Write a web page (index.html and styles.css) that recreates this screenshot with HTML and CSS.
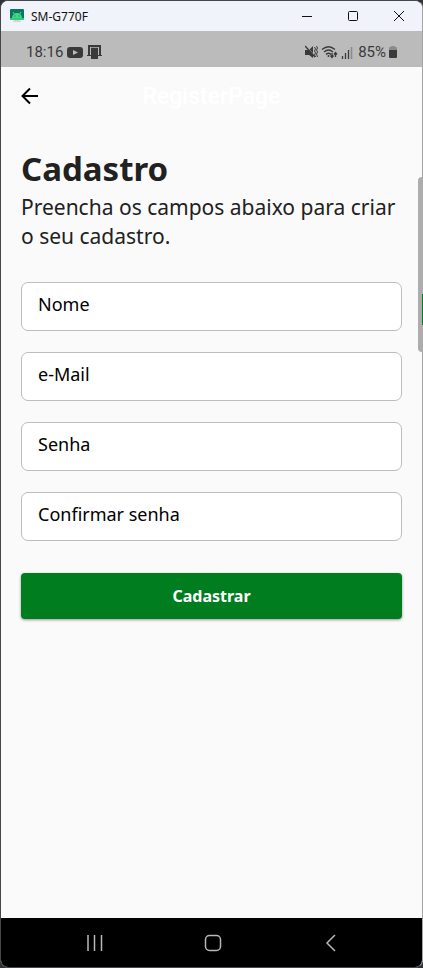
FILE: index.html
```html
<!DOCTYPE html>
<html lang="pt-BR">
<head>
<meta charset="utf-8">
<meta name="viewport" content="width=device-width, initial-scale=1">
<title>SM-G770F</title>
<link rel="stylesheet" href="styles.css">
</head>
<body>
<div class="window">
  <header class="titlebar">
    <svg class="app-icon" width="14" height="14" viewBox="0 0 14 14" aria-hidden="true">
      <rect width="14" height="11" rx="1" fill="#0d7367"/>
      <path d="M2 9a5 5 0 0 1 10 0z" fill="#3ddc84"/>
      <path d="M3 3l2 3M11 3l-2 3" stroke="#3ddc84"/>
      <path d="M4.500 7h1M8.500 7h1" stroke="#0d7367"/>
      <path d="M0 9h14v2H0z" fill="#35c878"/>
      <path d="M4 11h6v1h1v1H3v-1h1z" fill="#d5d3cf"/>
    </svg>
    <span class="device">SM-G770F</span>
    <div class="window-controls">
      <button type="button" aria-label="Minimizar"><svg width="12" height="12" viewBox="0 0 12 12"><path d="M1 6.500h10"/></svg></button>
      <button type="button" aria-label="Maximizar"><svg width="12" height="12" viewBox="0 0 12 12"><rect x="1.500" y="1.500" width="9" height="9" rx="1"/></svg></button>
      <button type="button" aria-label="Fechar"><svg width="12" height="12" viewBox="0 0 12 12"><path d="M1 1l10 10M11 1L1 11"/></svg></button>
    </div>
  </header>

  <div class="statusbar">
    <div class="status-group">
      <span>18:16</span>
      <svg width="16" height="12" viewBox="0 0 16 12" aria-hidden="true"><rect y="1" width="16" height="11" rx="3" fill="#3a3a3a"/><path d="M6 4v5l5-2.500z" fill="#bbb"/></svg>
      <svg width="16" height="16" viewBox="0 0 16 16" aria-hidden="true"><path d="M2 11V2h11v9" fill="none" stroke="#3a3a3a" stroke-width="2"/><path d="M0 11.500h4M11 11.500h4" stroke="#3a3a3a"/><path d="M4 4h7v11H4z" fill="#3a3a3a"/><path d="M4 3.500h7" stroke="#999"/></svg>
    </div>
    <div class="status-group status-right">
      <svg width="13" height="14" viewBox="0 0 13 14" aria-hidden="true"><path d="M0 5h4l4-4v12L4 10H0z" fill="#3a3a3a"/><path d="M1 1l9 10" stroke="#bbb"/><path d="M0 1l10 11" stroke="#3a3a3a" stroke-width="1.500"/><path d="M9.500 2l1 2-1 2 1 2-1 2 1 2M11.500 1l1 2-1 2 1 2-1 2 1 3" fill="none" stroke="#3a3a3a"/></svg>
      <svg width="17" height="14" viewBox="0 0 17 14" aria-hidden="true"><g fill="none" stroke="#3a3a3a" stroke-width="1.300"><path d="M1 4.500Q7.500-1 14 4.500M3 7Q7.500 3 12 7M5 9.500Q7.500 7 10 9.500"/><path d="M11 8v4M9.500 10.500L11 12.500l1.500-2M14.500 12V8M13 9.500L14.500 7.500 16 9.500"/></g><circle cx="7.500" cy="11" r="1" fill="#3a3a3a"/></svg>
      <svg width="12" height="13" viewBox="0 0 12 13" aria-hidden="true"><path d="M1.500 10v3M4.500 7v6M7.500 4v9" stroke="#3a3a3a" stroke-width="1.300"/><path d="M10.500 1v12" stroke="#8b8b8b" stroke-width="1.600"/></svg>
      <span class="charge">85%</span>
      <svg class="battery" width="8" height="14" viewBox="0 0 8 14" aria-hidden="true"><path d="M2 1h4v1h1q1 0 1 1v3H0V3q0-1 1-1h1z" fill="#8b8b8b"/><path d="M0 5h8v7q0 1-1 1H1q-1 0-1-1z" fill="#3a3a3a"/></svg>
    </div>
  </div>

  <nav class="appbar">
    <button type="button" class="back" aria-label="Voltar"><svg width="18" height="18" viewBox="0 0 18 18"><path d="M17 9H2M9 1.500L1.500 9 9 16.500"/></svg></button>
    <span class="page-title">RegisterPage</span>
  </nav>

  <main class="content">
    <h1>Cadastro</h1>
    <p class="intro">Preencha os campos abaixo para criar o seu cadastro.</p>
    <form class="form">
      <div class="field"><label for="nome">Nome</label><input id="nome" type="text"></div>
      <div class="field"><label for="email">e-Mail</label><input id="email" type="email"></div>
      <div class="field"><label for="senha">Senha</label><input id="senha" type="password"></div>
      <div class="field"><label for="confirmar">Confirmar senha</label><input id="confirmar" type="password"></div>
      <button type="submit" class="submit">Cadastrar</button>
    </form>
  </main>

  <footer class="navbar">
    <button type="button" aria-label="Recentes"><svg width="18" height="18" viewBox="0 0 18 18"><path d="M2 1v16M8.500 1v16M15.500 1v16"/></svg></button>
    <button type="button" aria-label="Início"><svg width="18" height="18" viewBox="0 0 18 18"><rect x="1.500" y="1.500" width="15" height="15" rx="4"/></svg></button>
    <button type="button" aria-label="Voltar ao anterior"><svg width="18" height="18" viewBox="0 0 18 18"><path d="M13 1L5 9l8 8"/></svg></button>
  </footer>
  <div class="edge-handle" aria-hidden="true"></div>
</div>
</body>
</html>
```

FILE: styles.css
```css
* { box-sizing: border-box; }

body {
  margin: 0;
  background: #303236;
  font-family: "Noto Sans", sans-serif;
  color: #212121;
}

button {
  border: 0;
  padding: 0;
  background: none;
  font: inherit;
}

svg { display: block; }

.window {
  position: relative;
  display: flex;
  flex-direction: column;
  min-height: 100vh;
  border: 1px solid #45474b;
  border-right-color: #a5a5a5;
  border-radius: 8px;
  background: #fafafa;
}

.titlebar {
  display: flex;
  align-items: center;
  height: 30px;
  padding-left: 9px;
  border-radius: 7px 7px 0 0;
  background: #f0f3fa;
  color: #111;
}

.device {
  margin-left: 7px;
  font-size: 12px;
}

.window-controls {
  display: flex;
  margin-left: auto;
}

.window-controls button {
  display: grid;
  place-items: center;
  width: 46px;
  height: 30px;
}

.window-controls svg {
  fill: none;
  stroke: #111;
}

.statusbar {
  display: flex;
  align-items: center;
  justify-content: space-between;
  height: 36px;
  padding: 6px 25px 0;
  background: #bbb;
  color: #3a3a3a;
  font-family: Roboto, sans-serif;
  font-size: 15px;
}

.status-group {
  display: flex;
  align-items: center;
  gap: 4px;
}

.charge { margin-left: 2px; }

.status-right { gap: 3px; }

.appbar {
  display: grid;
  grid-template-columns: 58px 1fr 58px;
  align-items: center;
  height: 58px;
}

.back {
  justify-self: center;
}

.back svg {
  fill: none;
  stroke: #000;
  stroke-width: 2;
}

.page-title {
  color: #fff;
  font-family: Roboto, sans-serif;
  font-size: 23px;
  font-weight: 500;
  text-align: center;
}

.content {
  flex: 1;
  padding: 20px;
}

h1 {
  margin: 0;
  font-size: 33px;
  line-height: 48px;
}

.intro {
  margin: 0;
  font-size: 21px;
  line-height: 29px;
}

.form {
  display: flex;
  flex-direction: column;
  gap: 21px;
  margin-top: 31px;
}

.field {
  display: grid;
  height: 49px;
}

.field label,
.field input {
  grid-area: 1 / 1;
}

.field label {
  z-index: 1;
  padding: 10px 17px;
  color: #000;
  font-size: 18px;
  line-height: 25px;
  pointer-events: none;
}

.field input {
  width: 100%;
  padding: 0 17px;
  border: 1px solid #bdbdbd;
  border-radius: 7px;
  background: #fff;
  font: inherit;
}

.submit {
  height: 46px;
  margin-top: 11px;
  border-radius: 4px;
  background: #007d1f;
  box-shadow: 0 1px 3px rgba(0, 0, 0, 0.4);
  color: #fff;
  font-size: 16px;
  font-weight: 700;
}

.navbar {
  display: flex;
  align-items: center;
  justify-content: center;
  gap: 100px;
  height: 49px;
  padding-left: 2px;
  border-radius: 0 0 7px 7px;
  background: #000;
}

.navbar svg {
  fill: none;
  stroke: #b8b8b8;
  stroke-width: 1.5;
}

.edge-handle {
  position: absolute;
  top: 176px;
  right: -1px;
  width: 5px;
  height: 175px;
  border-radius: 4px 0 0 4px;
  background: linear-gradient(#007d1f, #007d1f) right 117px / 1px 31px no-repeat #adadad;
}
```
